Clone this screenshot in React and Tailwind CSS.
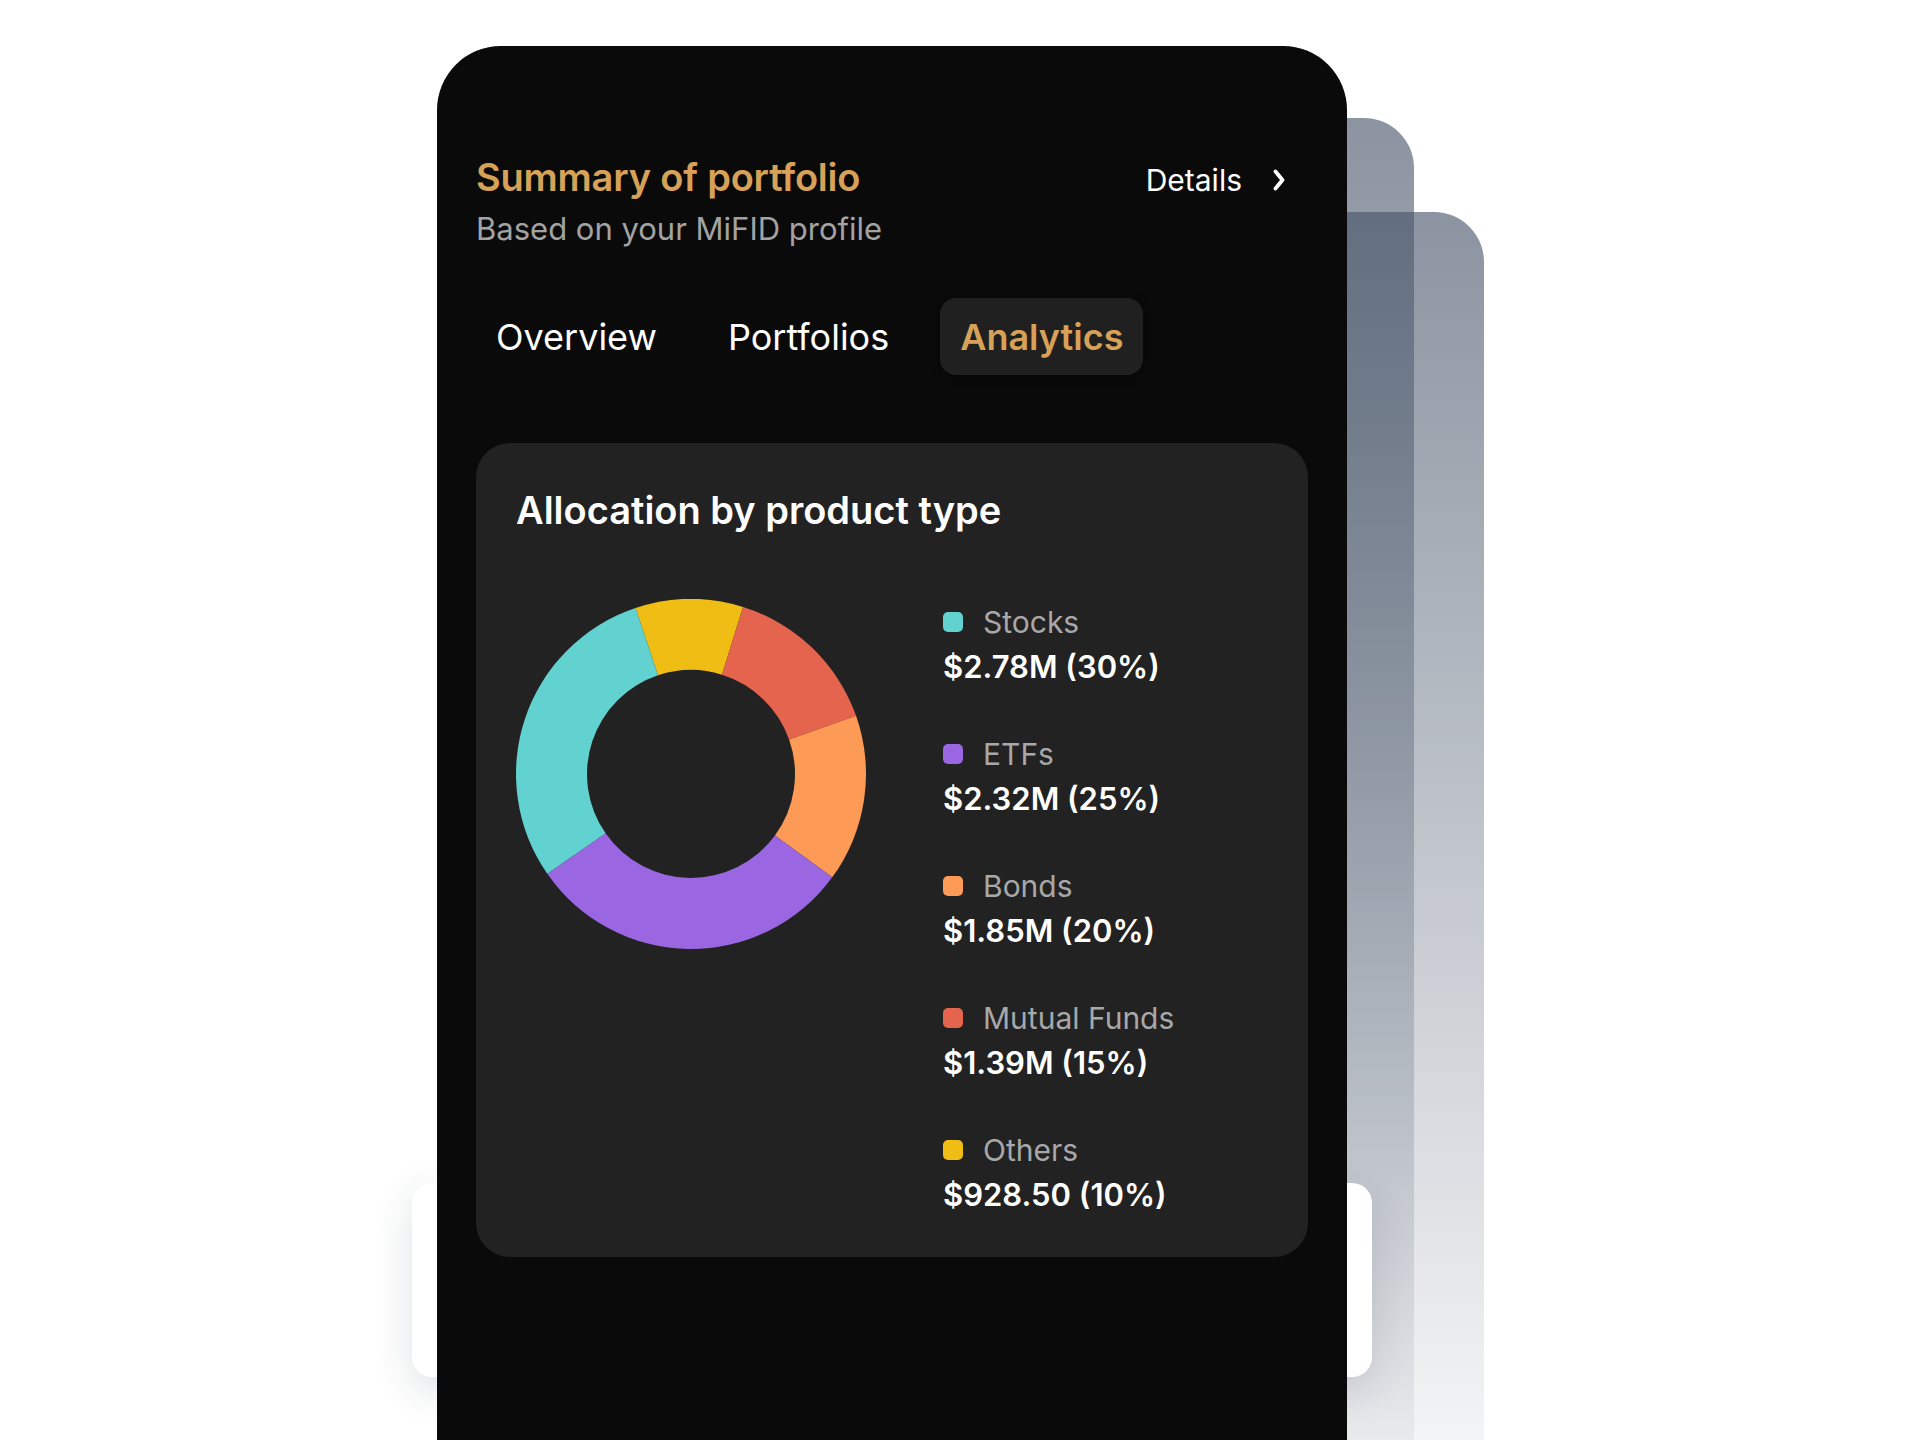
import React from "react";

const segments = [
  { color: "#f0bd14", start: -18.5, end: 17.3 },
  { color: "#e5644e", start: 17.3, end: 70.6 },
  { color: "#fd9a55", start: 70.6, end: 126.2 },
  { color: "#9b66e2", start: 126.2, end: 235.2 },
  { color: "#62d2d1", start: 235.2, end: 341.5 },
];

function pt(cx, cy, r, deg) {
  const a = (deg * Math.PI) / 180;
  return [cx + r * Math.sin(a), cy - r * Math.cos(a)];
}

function arcPath(cx, cy, ro, ri, s, e) {
  const large = e - s > 180 ? 1 : 0;
  const [x1, y1] = pt(cx, cy, ro, s);
  const [x2, y2] = pt(cx, cy, ro, e);
  const [x3, y3] = pt(cx, cy, ri, e);
  const [x4, y4] = pt(cx, cy, ri, s);
  return `M${x1} ${y1} A${ro} ${ro} 0 ${large} 1 ${x2} ${y2} L${x3} ${y3} A${ri} ${ri} 0 ${large} 0 ${x4} ${y4} Z`;
}

function Donut() {
  return (
    <svg width="350" height="350" viewBox="0 0 350 350" className="shrink-0">
      {segments.map((s, i) => (
        <path key={i} d={arcPath(175, 175, 175, 104, s.start, s.end)} fill={s.color} />
      ))}
    </svg>
  );
}

const legend = [
  { label: "Stocks", value: "$2.78M (30%)", color: "bg-[#62d2d1]" },
  { label: "ETFs", value: "$2.32M (25%)", color: "bg-[#9b66e2]" },
  { label: "Bonds", value: "$1.85M (20%)", color: "bg-[#fd9a55]" },
  { label: "Mutual Funds", value: "$1.39M (15%)", color: "bg-[#e5644e]" },
  { label: "Others", value: "$928.50 (10%)", color: "bg-[#f0bd14]" },
];

export default function App() {
  return (
    <div
      className="relative w-[1920px] h-[1440px] bg-white overflow-hidden"
      style={{ fontFamily: "Inter, 'Noto Sans', sans-serif" }}
    >
      {/* back stacked cards */}
      <div className="absolute left-[1200px] top-[118px] w-[214px] h-[1400px] rounded-tr-[50px] bg-gradient-to-b from-[rgba(71,85,105,0.63)] to-[rgba(71,85,105,0.03)] z-0" />
      <div className="absolute left-[1200px] top-[212px] w-[284px] h-[1300px] rounded-tr-[50px] bg-gradient-to-b from-[rgba(71,85,105,0.63)] to-[rgba(71,85,105,0.03)] z-0" />
      {/* white card behind */}
      <div className="absolute left-[412px] top-[1183px] w-[960px] h-[194px] rounded-[20px] bg-white shadow-[0_12px_40px_rgba(30,41,59,0.14)] z-10" />

      {/* main card */}
      <div className="relative z-20 ml-[437px] mt-[46px] w-[910px] h-[1460px] rounded-t-[64px] bg-[#0a0a0a] pt-[109px] px-[39px]">
        <div className="flex justify-between items-start">
          <div>
            <h1 className="text-[38px] leading-[44px] font-semibold text-[#d7a258] tracking-[-0.2px]">
              Summary of portfolio
            </h1>
            <p className="mt-[10px] text-[31px] leading-[40px] text-[#a3a3a3]">
              Based on your MiFID profile
            </p>
          </div>
          <div className="flex items-center h-[40px] mt-[5px] pr-[22px]">
            <span className="text-[30px] leading-[40px] text-white">Details</span>
            <svg width="14" height="22" viewBox="0 0 14 22" className="ml-[30px]">
              <path d="M3.5 2.5 L10.5 11 L3.5 19.5" fill="none" stroke="white" strokeWidth="3.8" strokeLinecap="round" strokeLinejoin="round" />
            </svg>
          </div>
        </div>

        <div className="mt-[49px] flex gap-[31px]">
          <div className="h-[77px] px-[20px] flex items-center text-[36px] text-white">Overview</div>
          <div className="h-[77px] px-[20px] flex items-center text-[36px] text-white">Portfolios</div>
          <div className="h-[77px] px-[20px] flex items-center text-[36px] font-semibold text-[#d7a258] bg-[#202020] rounded-[16px] shadow-[0_2px_8px_rgba(0,0,0,0.4)]">
            Analytics
          </div>
        </div>

        <div className="mt-[68px] bg-[#222222] rounded-[34px] pt-[45px] pb-[42px] px-[40px]">
          <h2 className="text-[38px] leading-[44px] font-semibold text-white">Allocation by product type</h2>
          <div className="mt-[67px] flex items-start">
            <Donut />
            <div className="ml-[77px] mt-[3px] flex flex-col gap-[47px]">
              {legend.map((l) => (
                <div key={l.label}>
                  <div className="flex items-center h-[40px]">
                    <span className={`w-[20px] h-[20px] rounded-[5px] ${l.color}`} />
                    <span className="ml-[20px] text-[30px] leading-[40px] text-[#a8a8a8]">{l.label}</span>
                  </div>
                  <div className="mt-[5px] text-[31px] leading-[40px] font-semibold text-white">{l.value}</div>
                </div>
              ))}
            </div>
          </div>
        </div>
      </div>
    </div>
  );
}
